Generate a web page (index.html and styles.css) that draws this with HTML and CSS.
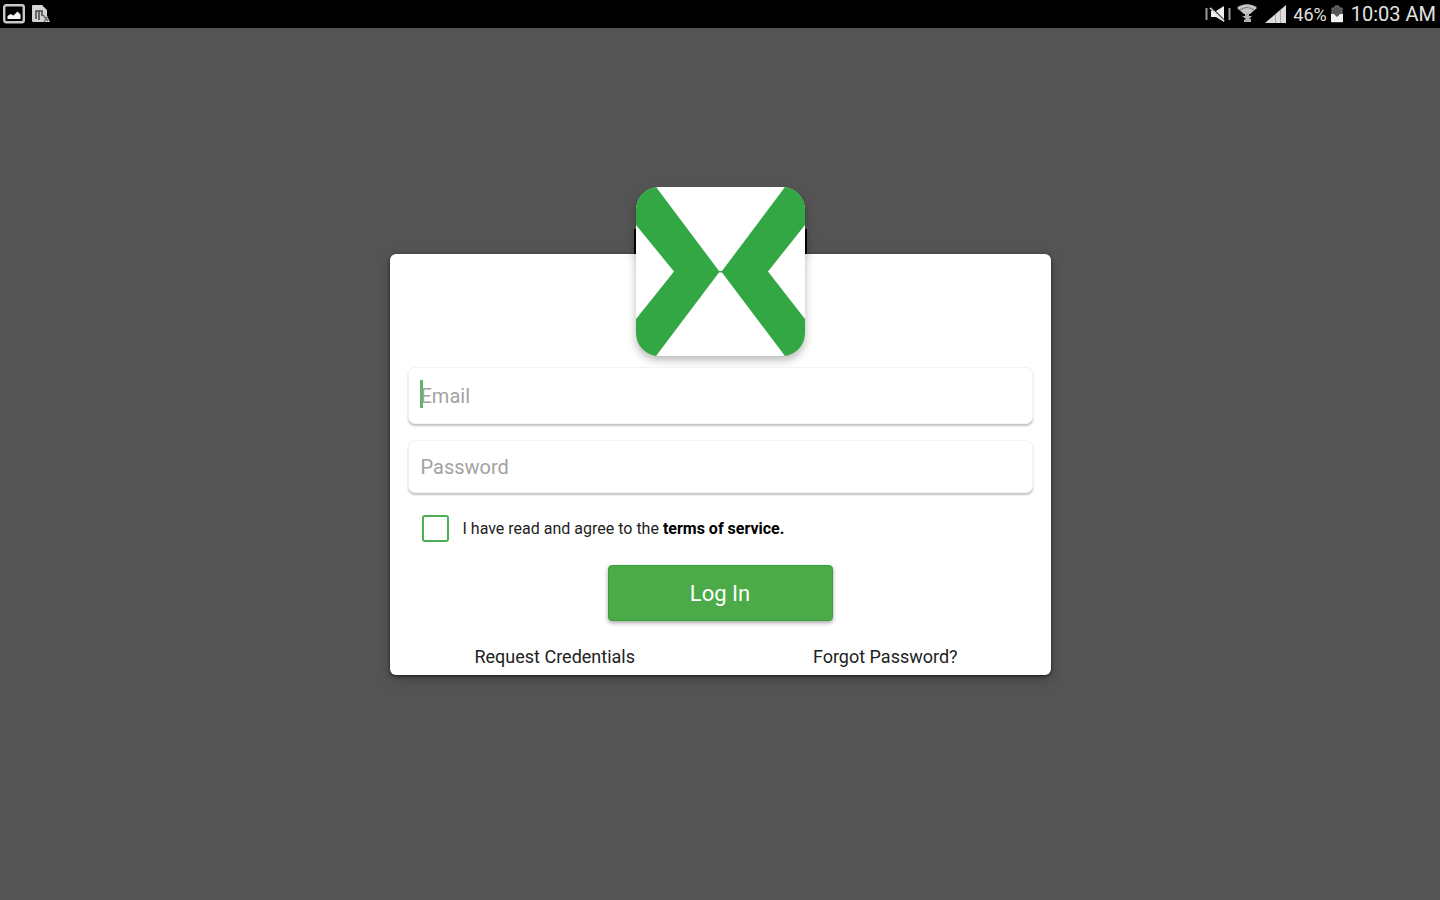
FILE: index.html
```html
<!DOCTYPE html>
<html lang="en">
<head>
<meta charset="utf-8">
<meta name="viewport" content="width=device-width, initial-scale=1">
<title>Log In</title>
<link rel="stylesheet" href="styles.css">
</head>
<body>
<header class="status">
  <div class="status-group notices">
    <svg width="22" height="20" viewBox="0 0 22 20" aria-hidden="true">
      <rect x="1.2" y="1.2" width="19.6" height="17" rx="2" fill="none" stroke="#c9c9c9" stroke-width="2.4"/>
      <path d="M4.500 15V12l3-2 3 1.500 4-4 3 3V15z" fill="#f4f4f4"/>
    </svg>
    <svg width="20" height="20" viewBox="0 0 20 20" aria-hidden="true">
      <path d="M2 1h9l5 5v6l3 6H2a2 2 0 0 1-1-1V2a1 1 0 0 1 1-1z" fill="#d4d4d4"/>
      <path d="M5 15V7h6v5M8 7v9" fill="none" stroke="#444" stroke-width="1.500"/>
      <path d="M12 11l5 6M17 12l-4 6" stroke="#666" stroke-width="1.300"/>
    </svg>
  </div>
  <div class="status-group system">
    <svg width="26" height="18" viewBox="0 0 26 18" aria-hidden="true">
      <path d="M1.500 3v12M24.500 3v12" stroke="#9a9a9a" stroke-width="2"/>
      <path d="M6 6h5l8-5v16l-8-5H6z" fill="#eee"/>
      <path d="M6 2l14 14" stroke="#222" stroke-width="1.200"/>
      <path d="M5 3l14 13" stroke="#ddd" stroke-width="1.500"/>
    </svg>
    <svg class="wifi" width="20" height="20" viewBox="0 0 20 20" aria-hidden="true">
      <path d="M0 4C5-1 15-1 20 4l-7 6h-6z" fill="#c4c4c4"/>
      <path d="M3 6q7-5 14 0" fill="none" stroke="#777" stroke-width="1.200"/>
      <path d="M8 9h4v3h3l-3 3h2v3H7v-2l2-1-4-3h3z" fill="#b4b4b4"/>
    </svg>
    <svg width="22" height="20" viewBox="0 0 22 20" aria-hidden="true">
      <path d="M0 19L21 1v18z" fill="#ddd"/>
      <path d="M10.500 10v9M15.500 6v13" stroke="#aaa"/>
    </svg>
    <span class="charge">46%</span>
    <svg class="battery" width="12" height="18" viewBox="0 0 12 18" aria-hidden="true">
      <path d="M4 1h4v2h3v14H1V3h3z" fill="#555" stroke="#777"/>
      <path d="M0 9h3l3 3 3-3h3v8H0z" fill="#f2f2f2"/>
    </svg>
    <time class="clock" datetime="10:03">10:03 AM</time>
  </div>
</header>
<main class="screen">
  <form class="card">
    <svg class="logo" viewBox="0 0 169 169" role="img" aria-label="Logo">
      <path d="M-2 42h173v25H-2z" fill="#000"/>
      <rect width="169" height="169" rx="23" fill="#fff"/>
      <path d="M20 0L83 84h3L149 0a23 23 0 0 1 20 23v15L132 84.500 169 132v14a23 23 0 0 1-20 23L86 85.500h-3L20 169a23 23 0 0 1-20-23v-14L38 84.500 0 38V23A23 23 0 0 1 20 0z" fill="#34a745"/>
    </svg>
    <div class="field field-email">
      <input class="input" type="email" placeholder="Email" aria-label="Email">
      <span class="caret"></span>
    </div>
    <div class="field">
      <input class="input" type="password" placeholder="Password" aria-label="Password">
    </div>
    <div class="terms">
      <input class="check" type="checkbox" id="agree">
      <label for="agree">I have read and agree to the <b>terms of service.</b></label>
    </div>
    <button class="login" type="submit">Log In</button>
    <nav class="links">
      <a href="#request">Request Credentials</a>
      <a href="#forgot">Forgot Password?</a>
    </nav>
  </form>
</main>
</body>
</html>
```

FILE: styles.css
```css
* { box-sizing: border-box; }
body {
  margin: 0;
  min-height: 100vh;
  display: flex;
  flex-direction: column;
  background: #545454;
  font-family: Roboto, "Liberation Sans", sans-serif;
  color: #222;
}
.status {
  height: 28px;
  padding: 0 4px 0 3px;
  display: flex;
  justify-content: space-between;
  align-items: center;
  background: #000;
  color: #e2e2e2;
}
.status-group { display: flex; align-items: center; }
.notices { gap: 6px; }
.system { gap: 6px; }
.wifi { margin-right: 2px; }
.charge { font-size: 18px; }
.battery { margin: 0 2px 0 -2px; }
.clock { font-size: 20px; line-height: 28px; }
.screen {
  flex: 1;
  display: flex;
  justify-content: center;
  align-items: center;
  padding: 67px 16px 66px;
}
.card {
  width: 100%;
  max-width: 661px;
  padding: 0 18px 8px;
  display: flex;
  flex-direction: column;
  background: #fff;
  border-radius: 6px;
  box-shadow: 0 1px 3px rgba(0, 0, 0, .6), 0 4px 12px rgba(0, 0, 0, .25);
}
.logo {
  width: 169px;
  height: 169px;
  margin: -67px 0 11px;
  align-self: center;
  overflow: visible;
  filter: drop-shadow(0 4px 4px rgba(0, 0, 0, .28));
}
.field { position: relative; margin-bottom: 16px; }
.input {
  display: block;
  width: 100%;
  height: 53px;
  padding: 0 12px;
  border: 1px solid #f3f3f3;
  border-radius: 7px;
  background: #fff;
  box-shadow: 0 2px 2px rgba(0, 0, 0, .24);
  font: 20px Roboto, "Liberation Sans", sans-serif;
  outline: 0;
}
.field-email .input { height: 57px; }
.input::placeholder { color: #a2a2a2; opacity: 1; }
.caret {
  position: absolute;
  left: 12px;
  top: 13px;
  width: 3px;
  height: 28px;
  background: #67b36a;
}
.terms {
  display: flex;
  align-items: center;
  gap: 14px;
  margin: 6px 14px 23px;
  font-size: 16px;
}
.check {
  appearance: none;
  width: 27px;
  height: 27px;
  margin: 0;
  border: 2px solid #4cae50;
  border-radius: 3px;
}
.check:checked { background: #4cae50; }
.terms b { color: #000; }
.login {
  align-self: center;
  width: 225px;
  height: 56px;
  padding: 0;
  border: 1px solid #36a338;
  border-radius: 4px;
  background: #4cab48;
  color: #fff;
  font: 22px Roboto, "Liberation Sans", sans-serif;
  box-shadow: 0 2px 4px rgba(0, 0, 0, .35);
}
.links {
  display: grid;
  grid-template-columns: 1fr 1fr;
  margin: 26px -18px 0;
  text-align: center;
  font-size: 18px;
  line-height: 20px;
}
.links a { color: #222; text-decoration: none; }
```
